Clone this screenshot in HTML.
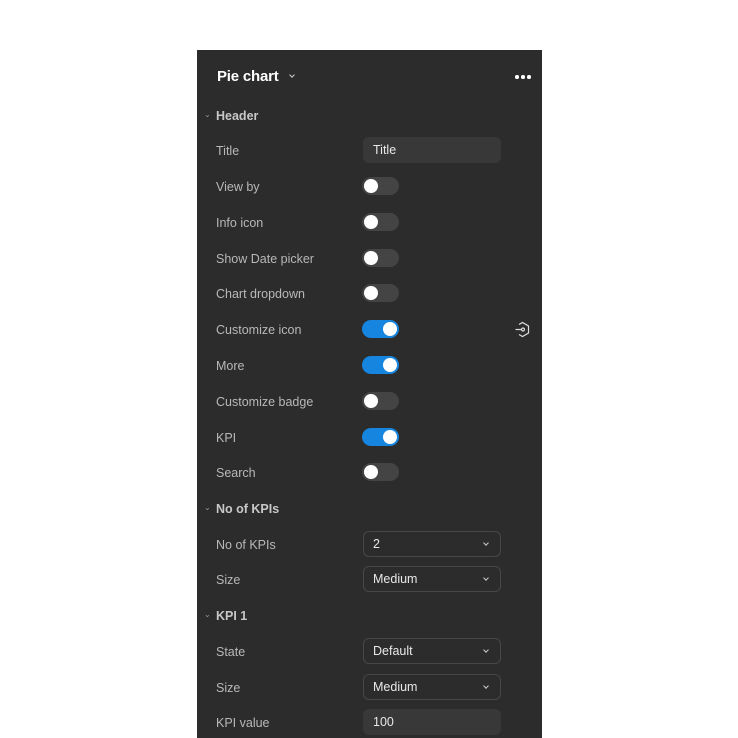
<!DOCTYPE html>
<html><head><style>
body{margin:0;width:738px;height:738px;background:#fff;position:relative;overflow:hidden;font-family:"Liberation Sans",sans-serif}
.p{position:absolute;left:197px;top:50px;width:345px;height:688px;background:#2c2c2c}
.a{position:absolute}
.l{position:absolute;left:216px;font-size:12.5px;color:#b8b8b8;line-height:16px;margin-top:1px}
.h{position:absolute;left:216px;font-size:12.5px;color:#c8c8c8;font-weight:bold;line-height:16px;margin-top:1px}
.c{position:absolute;left:204px;font-size:8px;color:#999}
.t{position:absolute;left:362px;width:37px;height:18px;border-radius:9px;background:#444}
.t::after{content:"";position:absolute;left:2px;top:2px;width:14px;height:14px;border-radius:50%;background:#fff}
.t.on{background:#1585e0}
.t.on::after{left:21px}
.i{position:absolute;left:363px;width:138px;height:26px;border-radius:6px;background:#383838;color:#e8e8e8;font-size:12.5px;line-height:27px;box-sizing:border-box;padding-left:10px}
.d{position:absolute;left:363px;width:138px;height:26px;border-radius:6px;border:1px solid #474747;color:#e8e8e8;font-size:12.5px;line-height:25px;box-sizing:border-box;padding-left:9px}
.d::after{content:"";position:absolute;right:12px;top:9px;width:3px;height:3px;border-right:1.2px solid #ccc;border-bottom:1.2px solid #ccc;transform:rotate(45deg)}
</style></head><body>
<div class="p"></div>
<div class="a" style="left:217px;top:68px;font-size:15px;color:#fff;font-weight:bold;letter-spacing:-0.2px">Pie chart</div>
<div class="a" style="left:290px;top:73px;width:3px;height:3px;border-right:1.2px solid #ccc;border-bottom:1.2px solid #ccc;transform:rotate(45deg)"></div>
<div class="a" style="left:515px;top:75px;width:3.5px;height:3.5px;border-radius:50%;background:#fff;box-shadow:6px 0 #fff,12px 0 #fff"></div>

<div class="c" style="top:110px">&#8964;</div><div class="h" style="top:107px">Header</div>
<div class="l" style="top:142px">Title</div><div class="i" style="top:137px">Title</div>
<div class="l" style="top:178px">View by</div><div class="t" style="top:177px"></div>
<div class="l" style="top:214px">Info icon</div><div class="t" style="top:213px"></div>
<div class="l" style="top:250px">Show Date picker</div><div class="t" style="top:249px"></div>
<div class="l" style="top:285px">Chart dropdown</div><div class="t" style="top:284px"></div>
<div class="l" style="top:321px">Customize icon</div><div class="t on" style="top:320px"></div>
<svg class="a" style="left:514px;top:321px" width="17" height="17" viewBox="0 0 17 17" fill="none" stroke="#ddd" stroke-width="1.2"><path d="M5 3.5 L8.5 1.5 L14.5 5 V12 L8.5 15.5 L5 13.5"/><circle cx="9" cy="8.5" r="1.5"/><path d="M1.5 8.5 H7.5"/></svg>
<div class="l" style="top:357px">More</div><div class="t on" style="top:356px"></div>
<div class="l" style="top:393px">Customize badge</div><div class="t" style="top:392px"></div>
<div class="l" style="top:429px">KPI</div><div class="t on" style="top:428px"></div>
<div class="l" style="top:464px">Search</div><div class="t" style="top:463px"></div>
<div class="c" style="top:503px">&#8964;</div><div class="h" style="top:500px">No of KPIs</div>
<div class="l" style="top:536px">No of KPIs</div><div class="d" style="top:531px">2</div>
<div class="l" style="top:571px">Size</div><div class="d" style="top:566px">Medium</div>
<div class="c" style="top:610px">&#8964;</div><div class="h" style="top:607px">KPI 1</div>
<div class="l" style="top:643px">State</div><div class="d" style="top:638px">Default</div>
<div class="l" style="top:679px">Size</div><div class="d" style="top:674px">Medium</div>
<div class="l" style="top:714px">KPI value</div><div class="i" style="top:709px">100</div>
</body></html>
